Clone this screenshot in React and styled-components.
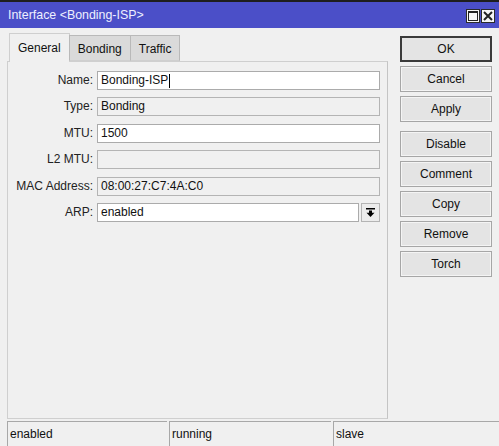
import React from "react";
import styled, { createGlobalStyle } from "styled-components";

const Global = createGlobalStyle`
  html, body { margin: 0; padding: 0; background: #f0f0f0; }
  body { font-family: "Liberation Sans", Arial, sans-serif; font-size: 12px; color: #1b1b1b; }
`;

const Window = styled.div`
  width: 499px;
  height: 446px;
  display: flex;
  flex-direction: column;
  background: #f0f0f0;
  overflow: hidden;
`;

const TitleBar = styled.div`
  height: 26px;
  border-top: 2px solid #1e1e1e;
  background: #4b4fc8;
  display: flex;
  align-items: center;
  justify-content: space-between;
  padding: 0 4px 0 8px;
  color: #eef0ff;
  font-size: 12.4px;
`;

const TitleText = styled.span`
  margin-top: -1px;
`;

const TitleButtons = styled.div`
  display: flex;
  gap: 1px;
  margin-top: 2px;
`;

const TitleButton = styled.div`
  width: 14px;
  height: 14px;
  box-sizing: border-box;
  background: #f6f6f6;
  border: 1px solid #2b2b2b;
  display: flex;
  align-items: center;
  justify-content: center;
`;

const Body = styled.div`
  flex: 1;
  display: flex;
  padding: 4px 7px 0 7px;
  gap: 12px;
`;

const LeftColumn = styled.div`
  width: 381px;
  display: flex;
  flex-direction: column;
`;

const TabStrip = styled.div`
  display: flex;
  align-items: flex-end;
  height: 29px;
  padding-left: 2px;
  position: relative;
  z-index: 1;
`;

const Tab = styled.div`
  box-sizing: border-box;
  height: ${(p) => (p.$active ? "29px" : "26px")};
  padding: 0 8px;
  margin-bottom: ${(p) => (p.$active ? "-1px" : "0")};
  display: flex;
  align-items: center;
  padding-top: ${(p) => (p.$active ? "0" : "2px")};
  background: ${(p) => (p.$active ? "#f0f0f0" : "#dadada")};
  border: 1px solid ${(p) => (p.$active ? "#cfcfcf" : "#b9b9b9")};
  border-bottom: ${(p) => (p.$active ? "none" : "1px solid #cfcfcf")};
  margin-left: ${(p) => (p.$first ? "0" : "-1px")};
  font-size: 12px;
  color: #111;
`;

const Panel = styled.div`
  flex: 1;
  box-sizing: border-box;
  border: 1px solid #cfcfcf;
  border-right: 1px solid #c4c4c4;
  display: grid;
  grid-template-columns: 85px 1fr;
  grid-auto-rows: 19px;
  column-gap: 4px;
  row-gap: 7.4px;
  align-content: start;
  padding: 9px 7px 0 0;
  margin-bottom: 2px;
`;

const Label = styled.div`
  text-align: right;
  line-height: 19px;
  color: #222;
  white-space: nowrap;
`;

const Field = styled.div`
  box-sizing: border-box;
  height: 19px;
  flex: 1;
  border: 1px solid ${(p) => (p.$disabled ? "#b4b4b4" : "#ababab")};
  background: ${(p) => (p.$disabled ? "#f0f0f0" : "#ffffff")};
  padding: 0 3px;
  line-height: 17px;
  color: #111;
  white-space: nowrap;
  display: flex;
  align-items: center;
`;

const Caret = styled.span`
  display: inline-block;
  width: 1px;
  height: 14px;
  background: #000;
  margin-left: 1px;
`;

const FieldRow = styled.div`
  display: flex;
  gap: 2px;
`;

const DropButton = styled.div`
  box-sizing: border-box;
  width: 19px;
  height: 19px;
  border: 1px solid #b4b4b4;
  background: #ececec;
  display: flex;
  align-items: center;
  justify-content: center;
`;

const ButtonColumn = styled.div`
  width: 92px;
  display: flex;
  flex-direction: column;
  gap: 4px;
  padding-top: 4px;
`;

const Button = styled.div`
  box-sizing: border-box;
  height: 26px;
  border: 1px solid ${(p) => (p.$default ? "#3a3a3a" : "#a6a6a6")};
  box-shadow: ${(p) => (p.$default ? "inset 0 0 0 1px #3a3a3a" : "inset 0 0 0 1px #f4f4f4")};
  background: #e4e4e4;
  display: flex;
  align-items: center;
  justify-content: center;
  color: #111;
  font-size: 12px;
  margin-top: ${(p) => (p.$spaced ? "5px" : "0")};
`;

const StatusBar = styled.div`
  height: 25px;
  display: grid;
  grid-template-columns: 160px 162px 1fr;
  gap: 2px;
  padding-left: 7px;
`;

const StatusCell = styled.div`
  border-top: 1px solid #a8a8a8;
  border-left: 1px solid #a8a8a8;
  padding: 0 2px;
  display: flex;
  align-items: center;
  color: #111;
`;

const MaxIcon = () => (
  <svg width="10" height="10" viewBox="0 0 10 10">
    <rect x="0.5" y="0.5" width="9" height="9" fill="none" stroke="#222" strokeWidth="1" />
    <rect x="0" y="0" width="10" height="2" fill="#222" />
  </svg>
);

const CloseIcon = () => (
  <svg width="10" height="10" viewBox="0 0 10 10">
    <path d="M1 1 L9 9 M9 1 L1 9" stroke="#222" strokeWidth="2" />
  </svg>
);

const DropIcon = () => (
  <svg width="9" height="9" viewBox="0 0 9 9">
    <rect x="0" y="0" width="9" height="1.5" fill="#000" />
    <rect x="3" y="2.5" width="3" height="2.5" fill="#000" />
    <polygon points="0.5,4.8 8.5,4.8 4.5,9" fill="#000" />
  </svg>
);

const fields = [
  { label: "Name:", value: "Bonding-ISP", caret: true },
  { label: "Type:", value: "Bonding", disabled: true },
  { label: "MTU:", value: "1500" },
  { label: "L2 MTU:", value: "", disabled: true },
  { label: "MAC Address:", value: "08:00:27:C7:4A:C0", disabled: true },
];

const buttons = [
  { text: "OK", def: true },
  { text: "Cancel" },
  { text: "Apply" },
  { text: "Disable", spaced: true },
  { text: "Comment" },
  { text: "Copy" },
  { text: "Remove" },
  { text: "Torch" },
];

export default function App() {
  return (
    <>
      <Global />
      <Window>
        <TitleBar>
          <TitleText>Interface &lt;Bonding-ISP&gt;</TitleText>
          <TitleButtons>
            <TitleButton><MaxIcon /></TitleButton>
            <TitleButton><CloseIcon /></TitleButton>
          </TitleButtons>
        </TitleBar>
        <Body>
          <LeftColumn>
            <TabStrip>
              <Tab $active $first>General</Tab>
              <Tab>Bonding</Tab>
              <Tab>Traffic</Tab>
            </TabStrip>
            <Panel>
              {fields.map((f) => (
                <React.Fragment key={f.label}>
                  <Label>{f.label}</Label>
                  <Field $disabled={f.disabled}>
                    {f.value}
                    {f.caret && <Caret />}
                  </Field>
                </React.Fragment>
              ))}
              <Label>ARP:</Label>
              <FieldRow>
                <Field>enabled</Field>
                <DropButton><DropIcon /></DropButton>
              </FieldRow>
            </Panel>
          </LeftColumn>
          <ButtonColumn>
            {buttons.map((b) => (
              <Button key={b.text} $default={b.def} $spaced={b.spaced}>
                {b.text}
              </Button>
            ))}
          </ButtonColumn>
        </Body>
        <StatusBar>
          <StatusCell>enabled</StatusCell>
          <StatusCell>running</StatusCell>
          <StatusCell>slave</StatusCell>
        </StatusBar>
      </Window>
    </>
  );
}
